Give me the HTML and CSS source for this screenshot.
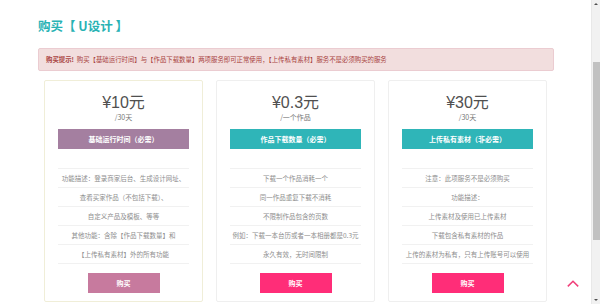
FILE: index.html
```html
<!DOCTYPE html>
<html lang="zh-CN">
<head>
<meta charset="utf-8">
<title>购买 U设计</title>
<link rel="stylesheet" href="styles.css">
</head>
<body>
<main class="container">
  <h2 class="title">购买【 U设计 】</h2>
  <div class="alert"><strong>购买提示!</strong>&nbsp; 购买【基础运行时间】与【作品下载数量】两项服务即可正常使用，【上传私有素材】服务不是必须购买的服务</div>
  <div class="plans">
    <section class="card card-active">
      <div class="price">¥10元</div>
      <div class="unit">/30天</div>
      <div class="bar bar-purple">基础运行时间（必需）</div>
      <ul class="features">
        <li>功能描述：登录商家后台、生成设计网址、</li>
        <li>查看买家作品（不包括下载）、</li>
        <li>自定义产品及模板、等等</li>
        <li>其他功能：含除【作品下载数量】和</li>
        <li>【上传私有素材】外的所有功能</li>
      </ul>
      <div class="buy-wrap"><button class="buy buy-mauve">购买</button></div>
    </section>
    <section class="card">
      <div class="price">¥0.3元</div>
      <div class="unit">/一个作品</div>
      <div class="bar bar-teal">作品下载数量（必需）</div>
      <ul class="features">
        <li>下载一个作品消耗一个</li>
        <li>同一作品重复下载不消耗</li>
        <li>不限制作品包含的页数</li>
        <li>例如：下载一本台历或者一本相册都是0.3元</li>
        <li>永久有效，无时间限制</li>
      </ul>
      <div class="buy-wrap"><button class="buy buy-pink">购买</button></div>
    </section>
    <section class="card">
      <div class="price">¥30元</div>
      <div class="unit">/30天</div>
      <div class="bar bar-teal">上传私有素材（非必需）</div>
      <ul class="features">
        <li>注意：此项服务不是必须购买</li>
        <li>功能描述：</li>
        <li>上传素材及使用已上传素材</li>
        <li>下载包含私有素材的作品</li>
        <li>上传的素材为私有，只有上传账号可以使用</li>
      </ul>
      <div class="buy-wrap"><button class="buy buy-pink">购买</button></div>
    </section>
  </div>
  <div class="page-bottom"></div>
</main>
<a class="to-top" href="#"><svg width="12" height="7" viewBox="0 0 12 7"><path d="M0.8 6.4 L6 1.2 L11.2 6.4" fill="none" stroke="#f0407a" stroke-width="1.5"/></svg></a>
<div class="scrollbar"><span class="sb-up"></span><span class="sb-thumb"></span><span class="sb-down"></span></div>
</body>
</html>
```
FILE: styles.css
```css
body {
  margin: 0;
  font-family: "Noto Sans CJK SC", "Liberation Sans", sans-serif;
  background: #fff;
  color: #555;
}
.container { width: 516px; padding-left: 38px; }
.title {
  margin: 0;
  padding-top: 18px;
  height: 48px;
  box-sizing: border-box;
  font-size: 12.5px;
  line-height: 16px;
  font-weight: 700;
  color: #27b2b4;
}
.alert {
  height: 23px;
  box-sizing: border-box;
  background: #f2dede;
  border: 1px solid #ebccd1;
  border-radius: 2px;
  color: #a94442;
  font-size: 6.4px;
  line-height: 21px;
  padding-left: 7px;
  white-space: nowrap;
}
.alert strong { font-weight: 700; }
.plans {
  display: flex;
  gap: 13px;
  padding: 0 7px 0 6px;
  margin-top: 9px;
}
.card {
  flex: 1;
  border: 1px solid #efefef;
  border-radius: 2px;
  padding: 12px 13px 8px;
  text-align: center;
}
.card-active { border-color: #f0eed8; }
.price {
  font-family: "Liberation Sans", "Noto Sans CJK SC", sans-serif;
  font-size: 16px;
  line-height: 20px;
  color: #505050;
}
.unit {
  font-size: 7px;
  line-height: 8px;
  color: #777;
}
.bar {
  margin-top: 8px;
  height: 20px;
  line-height: 20px;
  color: #fff;
  font-size: 7px;
  font-weight: 700;
}
.bar-purple { background: #a47fa0; }
.bar-teal { background: #2fb5b8; }
.features {
  list-style: none;
  margin: 19px 0 0;
  padding: 0;
}
.features li {
  border-top: 1px solid #f1f1f1;
  height: 18px;
  line-height: 18px;
  font-size: 6.5px;
  color: #8e8e8e;
  white-space: nowrap;
}
.features li:last-child { border-bottom: 1px solid #f1f1f1; }
.buy-wrap {
  margin-top: 9px;
  display: flex;
  justify-content: center;
}
.buy {
  width: 72px;
  height: 20px;
  border: 0;
  color: #fff;
  font-family: inherit;
  font-size: 7px;
  font-weight: 700;
  padding: 0;
}
.buy-mauve { background: #c77a9e; }
.buy-pink { background: #ff2d78; }
.page-bottom { height: 100px; }
.to-top {
  position: fixed;
  right: 21px;
  bottom: 17px;
  display: block;
  width: 12px;
  height: 7px;
}
.to-top svg { display: block; }
.scrollbar {
  position: fixed;
  top: 0;
  right: 0;
  width: 8px;
  height: 100%;
  background: #f1f1f1;
  border-left: 1px solid #e8e8e8;
}
.sb-thumb {
  position: absolute;
  left: 1px;
  right: 0;
  top: 62px;
  height: 178px;
  background: #c1c1c1;
}
.sb-up, .sb-down {
  position: absolute;
  left: 2px;
  width: 0;
  height: 0;
  border-left: 2px solid transparent;
  border-right: 2px solid transparent;
}
.sb-up { top: 3px; border-bottom: 2px solid #505050; }
.sb-down { bottom: 3px; border-top: 2px solid #505050; }
```
